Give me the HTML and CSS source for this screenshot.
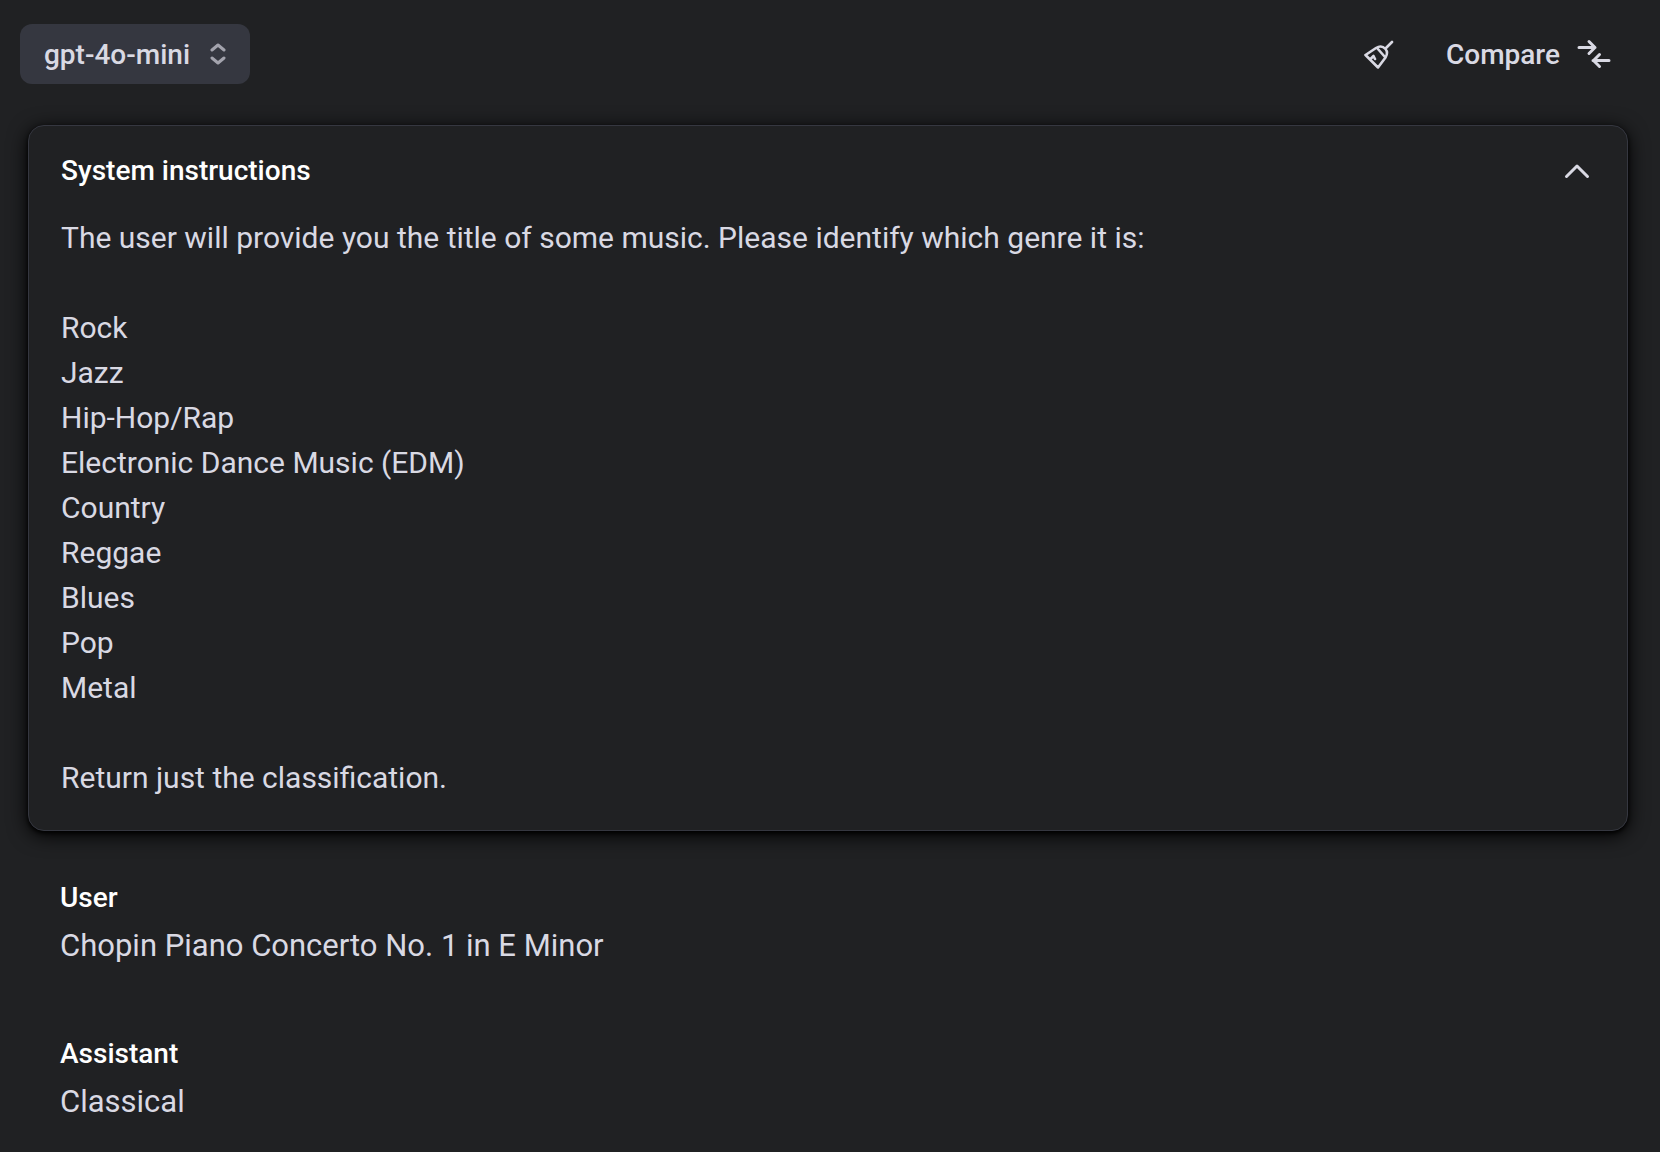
FILE: index.html
```html
<!DOCTYPE html>
<html lang="en">
<head>
<meta charset="utf-8">
<meta name="viewport" content="width=device-width, initial-scale=1">
<title>Playground</title>
<link rel="stylesheet" href="styles.css">
</head>
<body>
<header class="toolbar">
  <button class="model" type="button" aria-haspopup="listbox">
    <span class="label">gpt-4o-mini</span>
    <svg class="model-icon" width="16" height="22" viewBox="0 0 16 22" aria-hidden="true"><path d="M2 7 8 2l6 5M2 15 8 20l6-5"/></svg>
  </button>
  <div class="actions">
    <button class="action" type="button" aria-label="Clear">
      <svg class="icon broom" width="30" height="30" viewBox="0 0 30 30" aria-hidden="true"><path d="M28 3 21.500 9.500M1.500 16 12 9Q17.500 5.500 21.500 10 24.500 13.500 21.500 18.500L14 28.500ZM13.500 9.500 21 18M6 20.500l3.500-3.500 1.500 3"/></svg>
    </button>
    <button class="action" type="button">
      <span class="label">Compare</span>
      <svg class="icon" width="34" height="30" viewBox="0 0 34 30" aria-hidden="true"><path d="M2 8.500H18M12 2.500 18 8.500 12 14.500M32 21.500H16M22.500 15.500 16.500 21.500 22.500 27.500"/></svg>
    </button>
  </div>
</header>
<main class="thread">
  <section class="card">
    <div class="card-head">
      <label class="title" for="system">System instructions</label>
      <button class="collapse" type="button" aria-label="Collapse">
        <svg class="icon" width="26" height="16" viewBox="0 0 26 16" aria-hidden="true"><path d="M2.500 13.500 13 3 23.500 13.500"/></svg>
      </button>
    </div>
    <textarea class="prompt" id="system" rows="13" spellcheck="false">The user will provide you the title of some music. Please identify which genre it is:

Rock
Jazz
Hip-Hop/Rap
Electronic Dance Music (EDM)
Country
Reggae
Blues
Pop
Metal

Return just the classification.</textarea>
  </section>
  <article class="message">
    <h2 class="title">User</h2>
    <p class="text">Chopin Piano Concerto No. 1 in E Minor</p>
  </article>
  <article class="message">
    <h2 class="title">Assistant</h2>
    <p class="text">Classical</p>
  </article>
</main>
</body>
</html>
```
FILE: styles.css
```css
* {
  box-sizing: border-box;
}

body {
  margin: 0;
  background: #202123;
  color: #d9d9e3;
  font-family: Roboto, "Liberation Sans", sans-serif;
  font-size: 28px;
  line-height: 36px;
}

button {
  border: 0;
  padding: 0;
  background: none;
  color: inherit;
  font: inherit;
  cursor: pointer;
}

.toolbar {
  display: flex;
  align-items: center;
  justify-content: space-between;
  padding: 24px 49px 0 20px;
}

.model {
  display: flex;
  align-items: center;
  gap: 20px;
  height: 60px;
  padding: 0 24px;
  border-radius: 12px;
  background: #353740;
  font-weight: 500;
}

.label {
  padding-top: 2px;
}

.model-icon {
  fill: none;
  stroke: #a3a3ad;
  stroke-width: 3;
  stroke-linecap: round;
  stroke-linejoin: round;
}

.actions {
  display: flex;
  gap: 52px;
}

.action {
  display: flex;
  align-items: center;
  gap: 17px;
  font-weight: 500;
}

.icon {
  display: block;
  fill: none;
  stroke: currentColor;
  stroke-width: 3;
  stroke-linecap: round;
  stroke-linejoin: round;
}

.broom {
  stroke-width: 2.6;
}

.thread {
  padding: 41px 32px 0 28px;
}

.card {
  padding: 27px 32px 30px;
  border: 1px solid #353740;
  border-radius: 16px;
  box-shadow: 0 4px 20px #000, 0 2px 4px #000;
  background: #202123;
}

.card-head {
  display: flex;
  align-items: center;
  justify-content: space-between;
  padding-right: 5px;
}

.title {
  margin: 0;
  color: #fff;
  font-size: 28px;
  font-weight: 500;
  line-height: 36px;
}

.prompt {
  display: block;
  width: 100%;
  margin-top: 26px;
  padding: 0;
  border: 0;
  outline: 0;
  overflow: hidden;
  resize: none;
  background: transparent;
  color: inherit;
  font: inherit;
  font-size: 30px;
  line-height: 45px;
}

.message {
  padding: 49px 32px 17px;
}

.text {
  margin: 6px 0 0;
  font-size: 31px;
  line-height: 48px;
}
```
